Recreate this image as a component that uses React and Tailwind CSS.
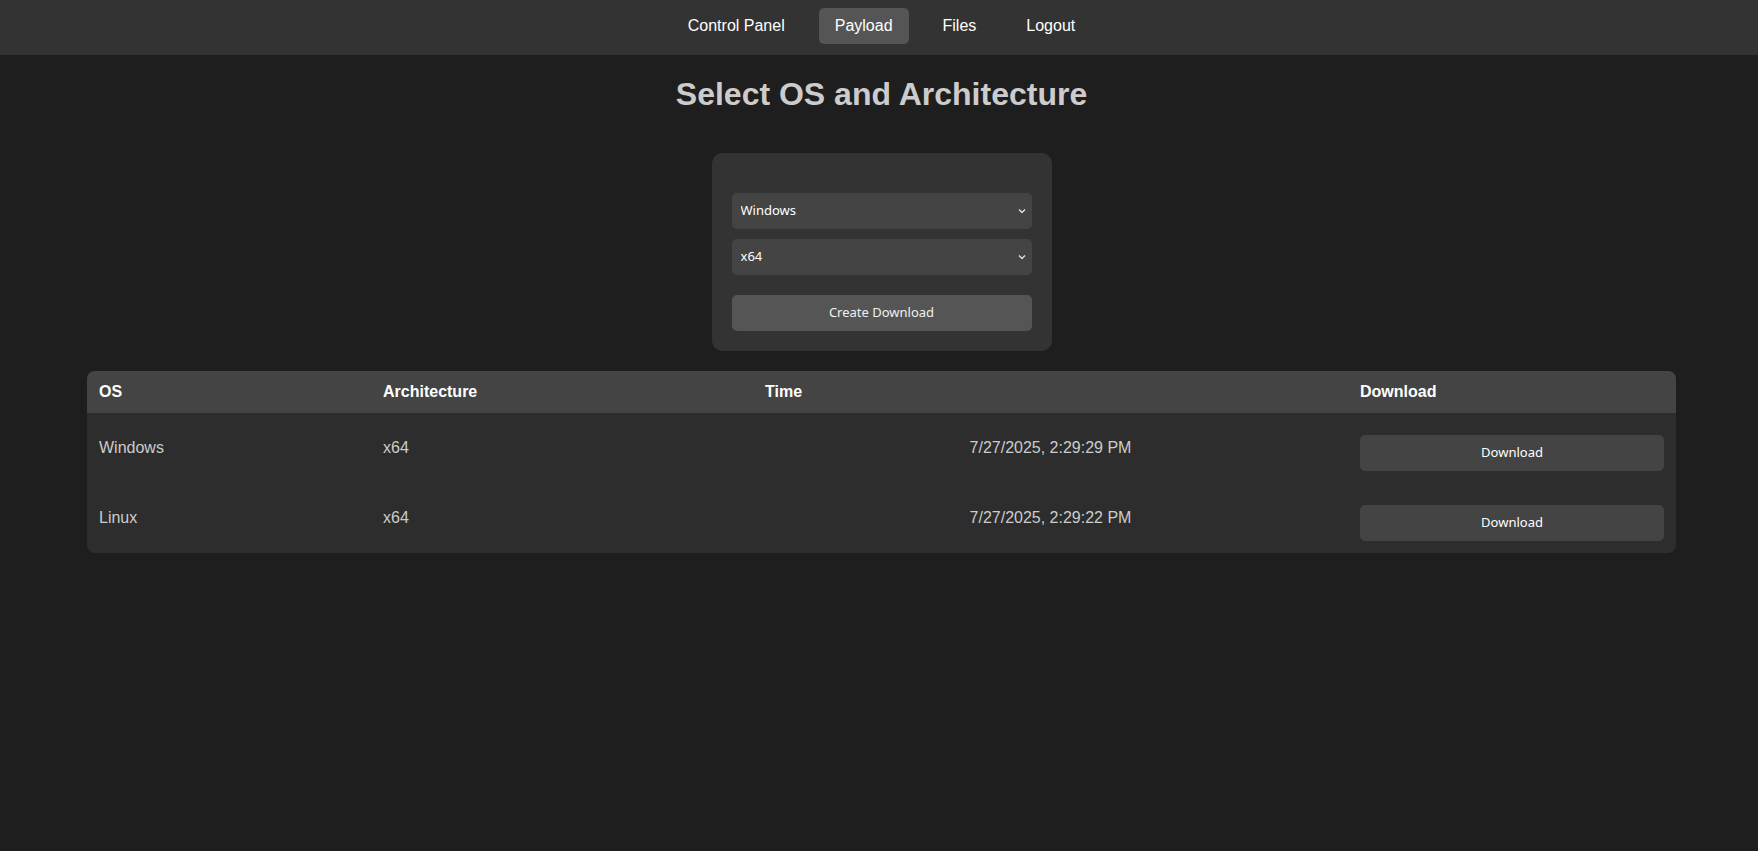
import { useState } from "react"

const Chevron = () => (
  <svg className="pointer-events-none absolute right-[6px] top-1/2 -translate-y-1/2" width="8" height="5" viewBox="0 0 8 5" fill="none">
    <path d="M1 1l3 3 3-3" stroke="#e5e5e5" strokeWidth="1.3" />
  </svg>
)

const rows = [
  { os: "Windows", arch: "x64", time: "7/27/2025, 2:29:29 PM" },
  { os: "Linux", arch: "x64", time: "7/27/2025, 2:29:22 PM" },
]

const App = () => {
  const [os, setOs] = useState("windows")
  const [arch, setArch] = useState("x64")

  return (
    <div className="min-h-[851px] bg-[#1e1e1e] pl-[5px] font-['Liberation_Sans',Arial,sans-serif]">
      <nav className="-ml-[5px] flex justify-center gap-[18px] bg-[#333333] pl-[5px] pt-2 pb-[11px]">
        <a className="rounded-[5px] px-4 py-2 text-[16px] leading-5 text-white">Control Panel</a>
        <a className="rounded-[5px] bg-[#555555] px-4 py-2 text-[16px] leading-5 text-white">Payload</a>
        <a className="rounded-[5px] px-4 py-2 text-[16px] leading-5 text-white">Files</a>
        <a className="rounded-[5px] px-4 py-2 text-[16px] leading-5 text-white">Logout</a>
      </nav>

      <h1 className="mt-[21px] mb-[40px] text-center text-[32px] font-bold leading-[37px] text-[#cccccc]">Select OS and Architecture</h1>

      <div className="mx-auto w-[340px] rounded-[10px] bg-[#333333] px-5 pt-10 pb-5 font-['Noto_Sans',sans-serif] text-[13px]">
        <div className="relative">
          <select value={os} onChange={e => setOs(e.target.value)} className="h-9 w-full appearance-none rounded-[5px] bg-[#444444] pl-[9px] text-white outline-none">
            <option value="windows">Windows</option>
            <option value="linux">Linux</option>
          </select>
          <Chevron />
        </div>
        <div className="relative mt-[10px]">
          <select value={arch} onChange={e => setArch(e.target.value)} className="h-9 w-full appearance-none rounded-[5px] bg-[#444444] pl-[9px] text-white outline-none">
            <option value="x64">x64</option>
            <option value="x86">x86</option>
          </select>
          <Chevron />
        </div>
        <button className="mt-5 h-9 w-full rounded-[5px] bg-[#555555] text-[#f0f0f0]">Create Download</button>
      </div>

      <div className="mx-auto mt-5 w-[1589px] overflow-hidden rounded-[8px] bg-[#2d2d2d]">
        <table className="w-full table-fixed border-collapse text-[16px]">
          <thead>
            <tr className="bg-[#444444] text-left text-white">
              <th className="w-[284px] px-3 py-3 leading-[18px] font-bold">OS</th>
              <th className="w-[382px] px-3 py-3 leading-[18px] font-bold">Architecture</th>
              <th className="w-[595px] px-3 py-3 leading-[18px] font-bold">Time</th>
              <th className="px-3 py-3 leading-[18px] font-bold">Download</th>
            </tr>
          </thead>
          <tbody className="text-[#cccccc]">
            {rows.map(r => (
              <tr key={r.time}>
                <td className="px-3 py-3 align-middle">{r.os}</td>
                <td className="px-3 py-3 align-middle">{r.arch}</td>
                <td className="px-3 py-3 text-center align-middle">{r.time}</td>
                <td className="px-3 py-3 align-middle">
                  <button className="mt-[10px] h-9 w-full rounded-[5px] bg-[#444444] font-['Noto_Sans',sans-serif] text-[13px] text-white">Download</button>
                </td>
              </tr>
            ))}
          </tbody>
        </table>
      </div>
    </div>
  )
}

export default App
